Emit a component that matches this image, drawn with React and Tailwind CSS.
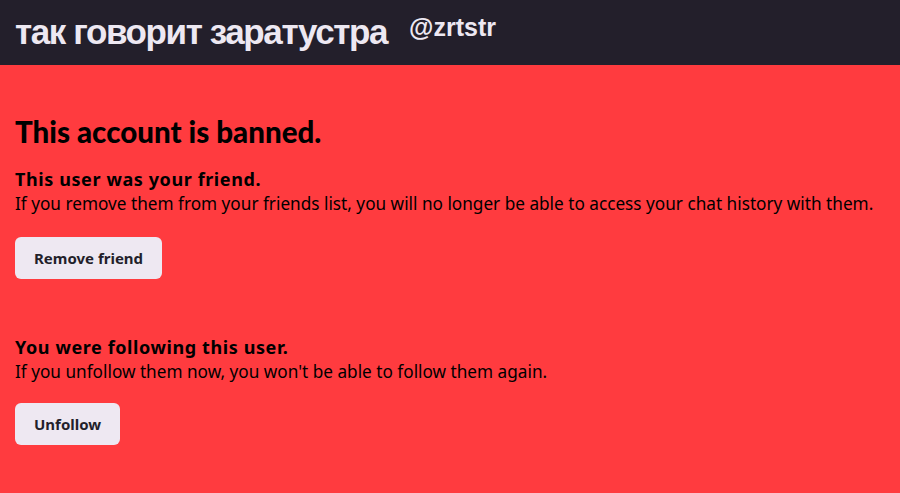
export default function App() {
  return (
    <div className="min-h-[493px] bg-[#ff3b3f] font-['Noto_Sans',sans-serif] text-black">
      <header className="h-[65px] bg-[#231f2b] px-[15px] flex items-center gap-[22px]">
        <h1 className="font-['Liberation_Sans',Arial,sans-serif] font-bold text-[35px] leading-none text-[#ede8f2] tracking-[-1.4px] -mt-[2px]">
          так говорит заратустра
        </h1>
        <span className="font-['Liberation_Sans',Arial,sans-serif] font-bold text-[25px] leading-none text-[#ede8f2] -mt-[10px]">
          @zrtstr
        </span>
      </header>

      <main className="px-[15px] pt-[50px]">
        <h2 className="font-['Lato',sans-serif] text-[29.5px] font-black leading-[34px]">This account is banned.</h2>

        <section className="mt-[18px]">
          <h3 className="text-[18px] font-bold leading-[24px] tracking-[0.6px]">This user was your friend.</h3>
          <p className="text-[17.2px] leading-[26px]">
            If you remove them from your friends list, you will no longer be able to access your chat history with them.
          </p>
          <button className="mt-[20px] h-[42px] px-[19px] rounded-md bg-[#eee8f2] text-[#231f2b] text-[15px] font-bold">
            Remove friend
          </button>
        </section>

        <section className="mt-[56px]">
          <h3 className="text-[18px] font-bold leading-[24px] tracking-[0.6px]">You were following this user.</h3>
          <p className="text-[17.2px] leading-[26px]">
            If you unfollow them now, you won't be able to follow them again.
          </p>
          <button className="mt-[18px] h-[42px] px-[19px] rounded-md bg-[#eee8f2] text-[#231f2b] text-[15px] font-bold">
            Unfollow
          </button>
        </section>
      </main>
    </div>
  );
}
